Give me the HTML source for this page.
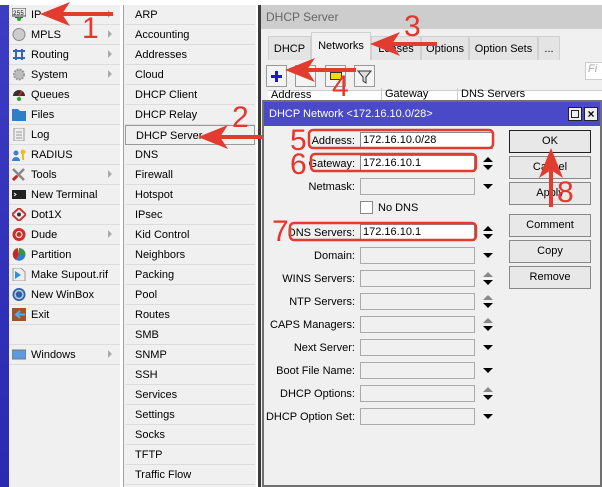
<!DOCTYPE html>
<html><head><meta charset="utf-8"><style>
*{margin:0;padding:0;box-sizing:border-box}
body{width:602px;height:487px;position:relative;overflow:hidden;background:#fff;font-family:"Liberation Sans",Arial,sans-serif;font-size:11px;color:#000}
.a{position:absolute}
.blue{left:0;top:5px;width:9px;height:482px;background:linear-gradient(#3c3cc4,#2a2ab0)}
.m1{left:9px;top:5px;width:111px;height:482px;background:#f0f0f0}
.m2{left:123px;top:5px;width:133px;height:482px;background:#f0f0f0;border-left:1px solid #a0a0a0}
.it{position:absolute;height:20px;line-height:20px;border-bottom:1px solid #dcdcdc;white-space:nowrap}
.m1 .it{left:0;width:111px;padding-left:22px}
.m2 .it{left:1px;width:130px;padding-left:10px}
.ic{position:absolute;left:3px;top:3px;width:14px;height:13px}
.sub{position:absolute;right:8px;top:5px;width:0;height:0;border-left:4px solid #aaa;border-top:4px solid transparent;border-bottom:4px solid transparent}
.win{left:258px;top:5px;width:344px;height:482px;background:#f0f0f0;border-left:3px solid #3a3a3a}
.tab{position:absolute;top:31px;height:24px;line-height:24px;text-align:center;background:#e4e4e4;border:1px solid #d0d0d0;border-bottom:none}
.tb{position:absolute;top:60px;width:21px;height:22px;border:1px solid #999;background:#f4f4f4}
.dlg{left:262px;top:100px;width:340px;height:387px;background:#f0f0f0;border:2px solid #707070}
.lbl{position:absolute;right:245px;text-align:right;white-space:nowrap}
.inp{position:absolute;left:96px;width:115px;height:17px;border:1px solid #aaa;background:#f0f0f0}
.inp.w{background:#fff;border-color:#888}
.btn{position:absolute;left:245px;width:82px;height:23px;border:1px solid #888;background:#e8e8e8;text-align:center;line-height:21px}
.dd{position:absolute;left:219px;width:0;height:0;border-left:5px solid transparent;border-right:5px solid transparent;border-top:5px solid #000}
.ud{position:absolute;left:219px;width:10px;height:13px}
.num{position:absolute;color:#e8342b;font-size:30px;line-height:30px}
</style></head><body>
<div class="a blue"></div>
<div class="a m1">
<div class="it" style="top:0"><svg class="ic" viewBox="0 0 14 13"><rect x="0" y="0" width="14" height="8" fill="#eee" stroke="#444"/><text x="1" y="7" font-size="6" font-family="Liberation Mono">255</text><rect x="3" y="9" width="8" height="1" fill="#444"/><circle cx="7" cy="11" r="2" fill="#2a2"/></svg>IP<span class="sub"></span></div>
<div class="it" style="top:20px"><svg class="ic" viewBox="0 0 14 13"><circle cx="7" cy="6.5" r="6" fill="#ccc" stroke="#888"/></svg>MPLS<span class="sub"></span></div>
<div class="it" style="top:40px"><svg class="ic" viewBox="0 0 14 13"><path d="M1 3h12M1 10h12M4 1v11M10 1v11" stroke="#3366bb" stroke-width="2"/></svg>Routing<span class="sub"></span></div>
<div class="it" style="top:60px"><svg class="ic" viewBox="0 0 14 13"><circle cx="7" cy="6.5" r="5" fill="#bbb" stroke="#999" stroke-width="2" stroke-dasharray="2 1"/></svg>System<span class="sub"></span></div>
<div class="it" style="top:80px"><svg class="ic" viewBox="0 0 14 13"><path d="M1 8a6 6 0 0 1 12 0z" fill="#333"/><path d="M7 8l3-5" stroke="#c22" stroke-width="2"/><circle cx="7" cy="11" r="2" fill="#2a2"/></svg>Queues</div>
<div class="it" style="top:100px"><svg class="ic" viewBox="0 0 14 13"><path d="M0 1h6l2 2h6v10H0z" fill="#2f7fc8"/></svg>Files</div>
<div class="it" style="top:120px"><svg class="ic" viewBox="0 0 14 13"><rect x="2" y="0" width="10" height="13" fill="#eee" stroke="#999"/><path d="M4 4h6M4 7h6M4 10h6" stroke="#999"/></svg>Log</div>
<div class="it" style="top:140px"><svg class="ic" viewBox="0 0 14 13"><circle cx="4" cy="5" r="2.5" fill="#3b7fd0"/><path d="M0 13a4 4 0 0 1 8 0z" fill="#3b7fd0"/><circle cx="11" cy="4" r="2.5" fill="#e8c020"/><path d="M11 6v6" stroke="#e8c020" stroke-width="2"/></svg>RADIUS</div>
<div class="it" style="top:160px"><svg class="ic" viewBox="0 0 14 13"><path d="M1 12L12 1M1 1l11 11" stroke="#888" stroke-width="2.5"/><path d="M1 12l4-4" stroke="#c22" stroke-width="3"/></svg>Tools<span class="sub"></span></div>
<div class="it" style="top:180px"><svg class="ic" viewBox="0 0 14 13"><rect x="0" y="2" width="14" height="9" fill="#222"/><path d="M2 5l2 1.5L2 8" stroke="#fff"/></svg>New Terminal</div>
<div class="it" style="top:200px"><svg class="ic" viewBox="0 0 14 13"><path d="M7 0l7 6.5L7 13 0 6.5z" fill="none" stroke="#c33" stroke-width="2"/><circle cx="7" cy="6.5" r="2" fill="#333"/></svg>Dot1X</div>
<div class="it" style="top:220px"><svg class="ic" viewBox="0 0 14 13"><circle cx="7" cy="6.5" r="6.5" fill="#c8302a"/><circle cx="7" cy="6.5" r="3" fill="none" stroke="#fff"/></svg>Dude<span class="sub"></span></div>
<div class="it" style="top:240px"><svg class="ic" viewBox="0 0 14 13"><path d="M7 6.5V0a6.5 6.5 0 0 1 6.5 6.5z" fill="#2a9a3a"/><path d="M7 6.5h6.5A6.5 6.5 0 0 1 4 12z" fill="#2f7fc8"/><path d="M7 6.5L4 12A6.5 6.5 0 0 1 6 0z" fill="#c02a2a"/></svg>Partition</div>
<div class="it" style="top:260px"><svg class="ic" viewBox="0 0 14 13"><path d="M1 0h8l4 4v9H1z" fill="#eee" stroke="#999"/><path d="M3 3l6 4-6 4z" fill="#2f8fd8"/></svg>Make Supout.rif</div>
<div class="it" style="top:280px"><svg class="ic" viewBox="0 0 14 13"><circle cx="7" cy="6.5" r="6.5" fill="#2f5fa8"/><circle cx="7" cy="6.5" r="4" fill="none" stroke="#bcd" stroke-width="1.5"/></svg>New WinBox</div>
<div class="it" style="top:300px"><svg class="ic" viewBox="0 0 14 13"><rect width="14" height="13" fill="#a0522d"/><path d="M13 6.5H5M8 3L4 6.5 8 10" stroke="#4ab0f0" stroke-width="2" fill="none"/></svg>Exit</div>
<div class="it" style="top:320px"></div>
<div class="it" style="top:340px"><svg class="ic" viewBox="0 0 14 13"><rect x="0" y="2" width="14" height="9" fill="#5a9ae0" stroke="#777"/></svg>Windows<span class="sub"></span></div>
</div>
<div class="a m2">
<div class="it" style="top:0">ARP</div><div class="it" style="top:20px">Accounting</div><div class="it" style="top:40px">Addresses</div><div class="it" style="top:60px">Cloud</div><div class="it" style="top:80px">DHCP Client</div><div class="it" style="top:100px">DHCP Relay</div><div class="it" style="top:120px;border:1px solid #999;background:#f0f0f0">DHCP Server</div><div class="it" style="top:140px">DNS</div><div class="it" style="top:160px">Firewall</div><div class="it" style="top:180px">Hotspot</div><div class="it" style="top:200px">IPsec</div><div class="it" style="top:220px">Kid Control</div><div class="it" style="top:240px">Neighbors</div><div class="it" style="top:260px">Packing</div><div class="it" style="top:280px">Pool</div><div class="it" style="top:300px">Routes</div><div class="it" style="top:320px">SMB</div><div class="it" style="top:340px">SNMP</div><div class="it" style="top:360px">SSH</div><div class="it" style="top:380px">Services</div><div class="it" style="top:400px">Settings</div><div class="it" style="top:420px">Socks</div><div class="it" style="top:440px">TFTP</div><div class="it" style="top:460px">Traffic Flow</div>
</div>
<div class="a win">
<div class="a" style="left:0;top:0;width:341px;height:24px;background:#cdcdcd;color:#666;padding-left:5px;line-height:24px;font-size:12px">DHCP Server</div>
<div class="tab" style="left:7px;width:43px">DHCP</div>
<div class="tab" style="left:50px;width:60px;top:27px;height:28px;line-height:26px;background:#f0f0f0">Networks</div>
<div class="tab" style="left:110px;width:50px">Leases</div>
<div class="tab" style="left:160px;width:48px">Options</div>
<div class="tab" style="left:208px;width:69px">Option Sets</div>
<div class="tab" style="left:277px;width:22px">...</div>
<div class="tb" style="left:5px"><svg width="19" height="20"><path d="M9.5 5v11M4 10.5h11" stroke="#1a1ad0" stroke-width="3"/></svg></div>
<div class="tb" style="left:34px"></div>
<div class="tb" style="left:64px"><div style="margin:6px 4px;width:12px;height:8px;background:#f0e000;border:1px solid #333"></div></div>
<div class="tb" style="left:93px"><svg width="19" height="20"><path d="M3 5h13l-5 6v6l-3-2v-4z" fill="#ddd" stroke="#333"/></svg></div>
<div class="a" style="left:324px;top:57px;width:20px;height:18px;border:1px solid #ccc;background:#fff;color:#aaa;font-style:italic;padding-left:2px">Fi</div>
<div class="a" style="left:7px;top:85px;width:340px;height:12px;background:#fff;border-top:1px solid #ccc"></div>
<div class="a" style="left:10px;top:84px">Address</div>
<div class="a" style="left:120px;top:83px;height:14px;border-left:1px solid #ccc;padding-left:3px">Gateway</div>
<div class="a" style="left:196px;top:83px;height:14px;border-left:1px solid #ccc;padding-left:3px">DNS Servers</div>
</div>
<div class="a dlg">
<div class="a" style="left:0;top:0;width:336px;height:24px;background:#4a4ac8;color:#fff;line-height:24px;padding-left:5px">DHCP Network &lt;172.16.10.0/28&gt;</div>
<div class="a" style="left:304px;top:5px;width:14px;height:14px;border:1px solid #222;background:#eee"><div style="margin:2px;width:8px;height:8px;border:1px solid #222"></div></div>
<div class="a" style="left:320px;top:5px;width:14px;height:14px;border:1px solid #222;background:#eee;font-size:12px;line-height:12px;text-align:center;font-weight:bold">×</div>
<div class="lbl" style="top:33px">Address:</div><div class="inp w" style="top:30px;width:133px;line-height:15px;padding-left:2px">172.16.10.0/28</div>
<div class="lbl" style="top:56px">Gateway:</div><div class="inp w" style="top:53px;line-height:15px;padding-left:2px">172.16.10.1</div>
<div class="lbl" style="top:79px">Netmask:</div><div class="inp" style="top:76px"></div>
<div class="a" style="left:96px;top:99px;width:13px;height:13px;border:1px solid #888;background:#fff"></div><div class="a" style="left:114px;top:100px">No DNS</div>
<div class="lbl" style="top:125px">DNS Servers:</div><div class="inp w" style="top:122px;line-height:15px;padding-left:2px">172.16.10.1</div>
<div class="lbl" style="top:148px">Domain:</div><div class="inp" style="top:145px"></div>
<div class="lbl" style="top:171px">WINS Servers:</div><div class="inp" style="top:168px"></div>
<div class="lbl" style="top:194px">NTP Servers:</div><div class="inp" style="top:191px"></div>
<div class="lbl" style="top:217px">CAPS Managers:</div><div class="inp" style="top:214px"></div>
<div class="lbl" style="top:240px">Next Server:</div><div class="inp" style="top:237px"></div>
<div class="lbl" style="top:263px">Boot File Name:</div><div class="inp" style="top:260px"></div>
<div class="lbl" style="top:286px">DHCP Options:</div><div class="inp" style="top:283px"></div>
<div class="lbl" style="top:309px">DHCP Option Set:</div><div class="inp" style="top:306px"></div>
<svg class="ud" style="top:55px" viewBox="0 0 10 13"><path d="M0 5l5-5 5 5zM0 8l5 5 5-5z" fill="#000"/></svg>
<div class="dd" style="top:82px"></div>
<svg class="ud" style="top:124px" viewBox="0 0 10 13"><path d="M0 5l5-5 5 5zM0 8l5 5 5-5z" fill="#000"/></svg>
<div class="dd" style="top:151px"></div>
<svg class="ud" style="top:170px" viewBox="0 0 10 13"><path d="M0 5l5-5 5 5z" fill="#888"/><path d="M0 8l5 5 5-5z" fill="#000"/></svg>
<svg class="ud" style="top:193px" viewBox="0 0 10 13"><path d="M0 5l5-5 5 5z" fill="#888"/><path d="M0 8l5 5 5-5z" fill="#000"/></svg>
<svg class="ud" style="top:216px" viewBox="0 0 10 13"><path d="M0 5l5-5 5 5z" fill="#888"/><path d="M0 8l5 5 5-5z" fill="#000"/></svg>
<div class="dd" style="top:243px"></div>
<div class="dd" style="top:266px"></div>
<svg class="ud" style="top:285px" viewBox="0 0 10 13"><path d="M0 5l5-5 5 5z" fill="#888"/><path d="M0 8l5 5 5-5z" fill="#000"/></svg>
<div class="dd" style="top:312px"></div>
<div class="btn" style="top:28px;border-color:#222">OK</div>
<div class="btn" style="top:54px">Cancel</div>
<div class="btn" style="top:80px">Apply</div>
<div class="btn" style="top:112px">Comment</div>
<div class="btn" style="top:138px">Copy</div>
<div class="btn" style="top:164px">Remove</div>
</div>
<svg class="a" style="left:0;top:0" width="602" height="487">
<g fill="none" stroke="#e23b30" stroke-width="2.5">
<rect x="309" y="130" width="184" height="18" rx="4"/>
<rect x="311" y="154" width="165" height="17" rx="4"/>
<rect x="290" y="223" width="186" height="17" rx="4"/>
</g>
<g stroke="#e23b30" stroke-width="4" fill="#e23b30">
<path d="M113 14H50"/><path d="M40 14l30-12-8 12 8 12z" stroke="none"/>
<path d="M262 137H210"/><path d="M198 137l30-12-8 12 8 12z" stroke="none"/>
<path d="M437 44H382"/><path d="M370 44l30-12-8 12 8 12z" stroke="none"/>
<path d="M356 70H297"/><path d="M285 70l30-12-8 12 8 12z" stroke="none"/>
<path d="M551 207V160"/><path d="M551 148l-12 30 12-8 12 8z" stroke="none"/>
</g>
</svg>
<div class="num" style="left:82px;top:14px">1</div>
<div class="num" style="left:232px;top:103px">2</div>
<div class="num" style="left:404px;top:12px">3</div>
<div class="num" style="left:332px;top:72px">4</div>
<div class="num" style="left:290px;top:126px">5</div>
<div class="num" style="left:290px;top:150px">6</div>
<div class="num" style="left:272px;top:217px">7</div>
<div class="num" style="left:557px;top:178px">8</div>
</body></html>
